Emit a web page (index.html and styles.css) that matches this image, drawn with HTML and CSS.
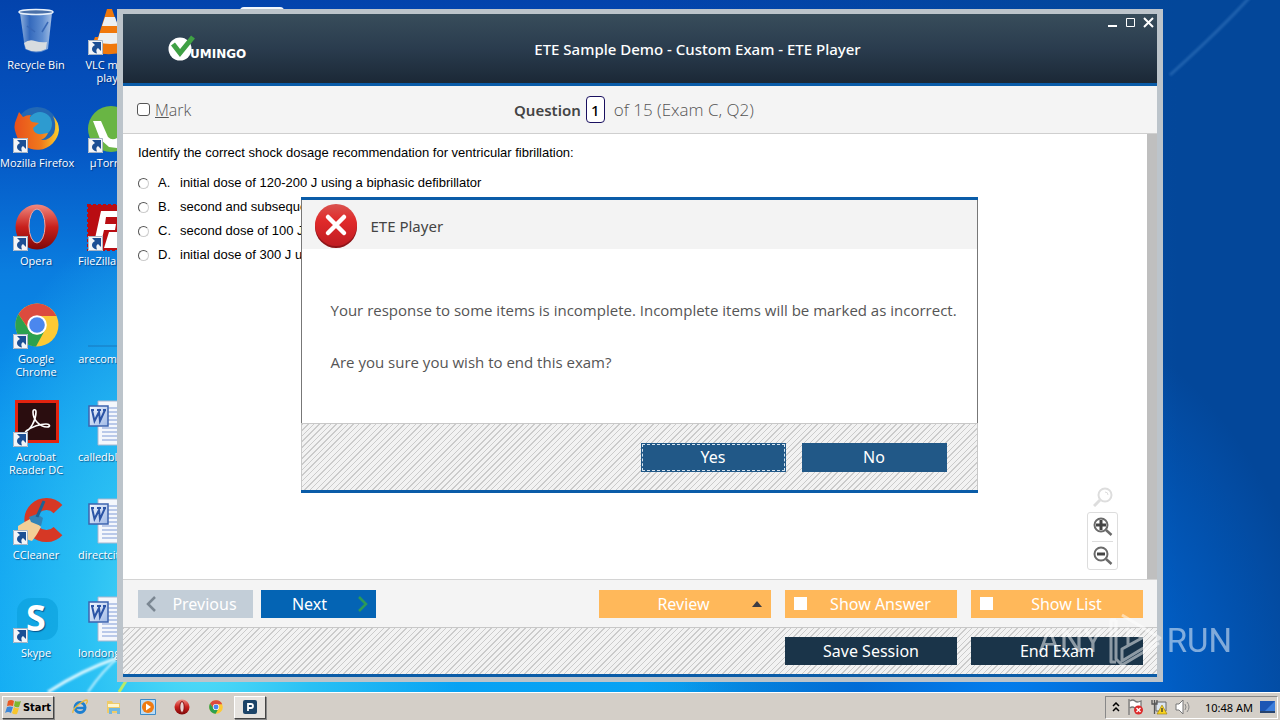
FILE: index.html
```html
<!DOCTYPE html>
<html lang="en">
<head>
<meta charset="utf-8">
<title>ETE Sample Demo - Custom Exam - ETE Player</title>
<link rel="stylesheet" href="styles.css">
</head>
<body>
<svg class="defs" aria-hidden="true">
  <defs>
    <linearGradient id="bin" x1="0" x2="1"><stop offset="0" stop-color="#a9c4e6"/><stop offset=".3" stop-color="#3c6fbe"/><stop offset=".7" stop-color="#6f9ad6"/><stop offset="1" stop-color="#c2d5ee"/></linearGradient>
    <linearGradient id="red" x1="0" y1="0" x2="0" y2="1"><stop offset="0" stop-color="#f08a80"/><stop offset=".5" stop-color="#c8201c"/><stop offset="1" stop-color="#7e0808"/></linearGradient>
    <linearGradient id="err" x1="0" y1="0" x2="0" y2="1"><stop offset="0" stop-color="#d9534f"/><stop offset=".4" stop-color="#e02a2a"/><stop offset="1" stop-color="#c01c22"/></linearGradient>
    <linearGradient id="fox" x1="0" y1="0" x2="1" y2="0"><stop offset="0" stop-color="#e8501c"/><stop offset=".6" stop-color="#f07a1c"/><stop offset="1" stop-color="#fbd02c"/></linearGradient>
    <linearGradient id="word" x1="0" y1="0" x2="1" y2="1"><stop offset="0" stop-color="#f4f8ff"/><stop offset="1" stop-color="#9fb9e6"/></linearGradient>
    <symbol id="shortcut" viewBox="0 0 15 15"><path d="M0 0h15v15H0z" fill="#f3f5f8"/><path d="M.5.5h14v14H.5z" fill="none" stroke="#a7b4c4"/><path d="M4 2h9v9l-3-3C8 9 8 11 9 13.500 3 12.500 2.500 7 7 5z" fill="#1c4f94"/></symbol>
    <symbol id="chrome" viewBox="0 0 44 44"><circle cx="22" cy="22" r="21.500" fill="#fcca35"/><path d="M3.400 11.300A21.500 21.500 0 0 1 41.500 13H22a9.500 9.500 0 0 0-9 12z" fill="#dc4b3e"/><path d="M3.400 11.300A21.500 21.500 0 0 0 21 43.500L30.500 26a9.500 9.500 0 0 1-17.400-.5z" fill="#2ca14f"/><circle cx="22" cy="22" r="9.800" fill="#fff"/><circle cx="22" cy="22" r="7.800" fill="#4b87ee"/></symbol>
    <symbol id="opera" viewBox="0 0 44 46"><path fill-rule="evenodd" d="M22 .5a21.500 22.500 0 1 0 .1 0zM22 5a8 17 0 1 1-.1 0z" fill="url(#red)"/><ellipse cx="22" cy="22" rx="8" ry="17" fill="none" stroke="#f3a59c"/></symbol>
    <symbol id="doc" viewBox="0 0 46 46"><path d="M10 1h36v44H10z" fill="#f4f7fc" stroke="#a9b7cf"/><path d="M14 8h30M14 12h30M14 16h30M14 20h30M14 24h30M14 28h30M14 32h30M14 36h30M14 40h30" stroke="#7f9bd6"/><path d="M1 6h19v20H1z" fill="url(#word)" stroke="#3c64ae" stroke-width="1.500"/><path d="M4 10l2.500 11L11 12l1 9 5-11M3 10h3M9 10h4M15 10h3" fill="none" stroke="#2b54a6" stroke-width="2"/></symbol>
    <symbol id="lens" viewBox="0 0 20 20"><circle cx="8" cy="8" r="6.500" fill="none" stroke="currentColor" stroke-width="2"/><path d="M13 13l5.500 5" stroke="currentColor" stroke-width="2.500"/></symbol>
  </defs>
</svg>
<div class="desktop">
  <svg class="wallpaper" viewBox="0 0 1280 692" preserveAspectRatio="none" aria-hidden="true">
    <defs><filter id="glow"><feGaussianBlur stdDeviation="1.300"/></filter></defs>
    <path d="M48 692Q82 670 120 657" stroke="#d8f7ff" stroke-width="3" fill="none" filter="url(#glow)"/>
    <path d="M88 692Q103 670 119 657" stroke="#c5f2ff" stroke-width="2" fill="none" filter="url(#glow)"/>
    <path d="M119 692l7-11" stroke="#b8ea6a" stroke-width="3"/>
    <path d="M1170 75Q1220 30 1250-3" stroke="#3f7fc4" stroke-width="3" fill="none" opacity=".5" filter="url(#glow)"/>
    <rect x="240" y="7" width="44" height="8" rx="4" fill="#f2f6fb"/>
  </svg>

  <main class="workspace">
    <ul class="icons">
      <li><svg viewBox="0 0 48 48"><path d="M8 5l5 36q11 7 23 0l4-36z" fill="url(#bin)" opacity=".85"/><ellipse cx="24" cy="4" rx="17" ry="2.500" fill="#4a70a8" stroke="#e8f1fb" stroke-width="1.500"/><path d="M12 35q5-4 11-2t12 1l-1 7q-10 5-20 0z" fill="#d8dcdf"/><path d="M15 18l8 6M36 14l-6 10" fill="none" stroke="#3868b6" stroke-width="1.500"/></svg><span>Recycle Bin</span></li>
      <li><svg viewBox="0 0 48 48"><circle cx="25" cy="22" r="21" fill="#2268b4"/><circle cx="28" cy="18" r="12" fill="#2d9bd0"/><path d="M4 14l3-8 4 5q3-2 8-2-3 4 1 7l7 1-6 5q1 7 9 6l6-1q-2 5-7 7 8 1 13-7 3-9-1-17 6 6 6 14a22 22 0 0 1-43 4q-3-8 0-14z" fill="url(#fox)"/><use href="#shortcut" x="1" y="32" width="15" height="15"/></svg><span>Mozilla Firefox</span></li>
      <li><svg viewBox="0 0 48 48"><use href="#opera" x="3" y="0" width="44" height="46"/><use href="#shortcut" x="1" y="32" width="15" height="15"/></svg><span>Opera</span></li>
      <li><svg viewBox="0 0 48 48"><use href="#chrome" x="3" y="1" width="44" height="44"/><use href="#shortcut" x="1" y="32" width="15" height="15"/></svg><span>Google Chrome</span></li>
      <li><svg viewBox="0 0 48 48"><path d="M3 0h44v43H3z" fill="#e2230f"/><path d="M6 3h38v37H6z" fill="#2a0d0f"/><path d="M13 32c5-2 11-11 11-20 0-3-3-3-3 0 0 8 7 15 14 15 4 0 3-3-1-3-7 0-14 3-20 7" fill="none" stroke="#fff" stroke-width="1.600"/><use href="#shortcut" x="1" y="32" width="15" height="15"/></svg><span>Acrobat Reader DC</span></li>
      <li><svg viewBox="0 0 48 48"><path d="M46 11A16 16 0 1 0 46 33" fill="none" stroke="#d63825" stroke-width="12"/><path d="M6 28q8-5 14-8l9 9q-4 8-9 14-8-2-14-10z" fill="#f3cf98"/><path d="M17 19l8-3 6 4-2 8-10-4z" fill="#3284b8"/><path d="M25 19l7-16" stroke="#1d6294" stroke-width="3"/><use href="#shortcut" x="1" y="32" width="15" height="15"/></svg><span>CCleaner</span></li>
      <li><svg viewBox="0 0 48 48"><rect x="5" y="2" width="41" height="42" rx="14" fill="#0aa0dc" opacity=".65"/><text class="skype-s" x="14" y="35">S</text><use href="#shortcut" x="1" y="32" width="15" height="15"/></svg><span>Skype</span></li>
      <li><svg viewBox="0 0 48 48"><path d="M20 1h5l13 38H8z" fill="#f0780c"/><path d="M18 9h10l3 9H15zM13 25h20l3 9H10z" fill="#eceff2"/><path d="M5 37l3-8h30l8 14q-20 5-38 2z" fill="#f0780c"/><path d="M13 25h20l3 9q-12 4-26 0z" fill="#eceff2"/><use href="#shortcut" x="1" y="32" width="15" height="15"/></svg><span>VLC media player</span></li>
      <li><svg viewBox="0 0 48 48"><circle cx="24" cy="23" r="23" fill="#69b544"/><path d="M6 15h8l7 16q4 4 9 1V12h8v30h-8l-8-1-9-8z" fill="#fff"/><use href="#shortcut" x="1" y="32" width="15" height="15"/></svg><span>µTorrent</span></li>
      <li><svg viewBox="0 0 48 48"><path d="M1 1h46v45H1z" fill="#b90d12" stroke="#b90d12" stroke-width="2" stroke-dasharray="3 2"/><path d="M14 7h26l-1 6H19l-1 7h11l-1 6H17l-3 13H7zM22 28h22l-12 11h12v5H17z" fill="#fff"/><use href="#shortcut" x="1" y="32" width="15" height="15"/></svg><span>FileZilla Client</span></li>
      <li><svg viewBox="0 0 48 48"><path d="M1 44h46" stroke="#1879bd" stroke-width="1"/></svg><span>arecomes.jpg</span></li>
      <li><svg viewBox="0 0 48 48"><use href="#doc" x="1" y="0" width="46" height="46"/></svg><span>calledblack.rtf</span></li>
      <li><svg viewBox="0 0 48 48"><use href="#doc" x="1" y="0" width="46" height="46"/></svg><span>directcities.rtf</span></li>
      <li><svg viewBox="0 0 48 48"><use href="#doc" x="1" y="0" width="46" height="46"/></svg><span>londongolf.rtf</span></li>
    </ul>

    <section class="window" aria-label="ETE Player">
      <header class="titlebar">
        <div class="brand">
          <svg width="28" height="28" viewBox="0 0 28 28" aria-hidden="true"><circle cx="12" cy="14" r="11.500" fill="#fff"/><path d="M5 9l7 9L25 2" fill="none" stroke="#3fa044" stroke-width="5"/></svg>
          <span>UMINGO</span>
        </div>
        <h1>ETE Sample Demo - Custom Exam - ETE Player</h1>
        <div class="controls">
          <button aria-label="Minimize"><svg width="11" height="11"><path d="M1 9h9" stroke="#fff" stroke-width="2"/></svg></button>
          <button aria-label="Maximize"><svg width="11" height="11"><path d="M1.500 1.500h8v8h-8z" fill="none" stroke="#fff"/></svg></button>
          <button aria-label="Close"><svg width="11" height="11"><path d="M1 1l9 9M10 1l-9 9" stroke="#fff" stroke-width="2"/></svg></button>
        </div>
      </header>

      <div class="question-bar">
        <label class="mark"><input type="checkbox"><span><u>M</u>ark</span></label>
        <div class="position"><label for="number">Question</label><input id="number" type="text" value="1"><span>of 15 (Exam C, Q2)</span></div>
      </div>

      <div class="content">
        <form class="question">
          <p>Identify the correct shock dosage recommendation for ventricular fibrillation:</p>
          <label><input type="radio" name="answer"><span>A.</span><span>initial dose of 120-200 J using a biphasic defibrillator</span></label>
          <label><input type="radio" name="answer"><span>B.</span><span>second and subsequent</span></label>
          <label><input type="radio" name="answer"><span>C.</span><span>second dose of 100 J</span></label>
          <label><input type="radio" name="answer"><span>D.</span><span>initial dose of 300 J using</span></label>
        </form>
        <div class="zoom">
          <svg class="faint" width="20" height="20" viewBox="0 0 20 20" aria-hidden="true"><circle cx="12" cy="8" r="6.500" fill="none" stroke="currentColor" stroke-width="2"/><path d="M7 13l-6 6" stroke="currentColor" stroke-width="3"/><path d="M12 5a3 3 0 0 1 3 3" fill="none" stroke="currentColor"/></svg>
          <div class="zoom-box">
            <button aria-label="Zoom in"><svg width="20" height="20" viewBox="0 0 20 20"><use href="#lens"/><path d="M8 3v10M3 8h10" stroke="#444" stroke-width="3"/></svg></button>
            <button aria-label="Zoom out"><svg width="20" height="20" viewBox="0 0 20 20"><use href="#lens"/><path d="M4 8h8" stroke="#444" stroke-width="3"/></svg></button>
          </div>
        </div>
        <div class="scrollbar"></div>
      </div>

      <div class="actions">
        <button class="btn previous"><svg width="12" height="18" viewBox="0 0 12 18"><path d="M10 2L3 9l7 7" fill="none" stroke="#7b8792" stroke-width="2.500"/></svg><span>Previous</span></button>
        <button class="btn next"><span>Next</span><svg width="12" height="18" viewBox="0 0 12 18"><path d="M2 2l7 7-7 7" fill="none" stroke="#2b9a58" stroke-width="2.500"/></svg></button>
        <button class="btn amber review"><span>Review</span><svg width="10" height="6"><path d="M0 6l5-6 5 6z" fill="#3c3c44"/></svg></button>
        <label class="btn amber"><input type="checkbox"><span>Show Answer</span></label>
        <label class="btn amber"><input type="checkbox"><span>Show List</span></label>
      </div>
      <footer class="session hatch">
        <button class="btn dark">Save Session</button>
        <button class="btn dark">End Exam</button>
      </footer>
    </section>

    <section class="dialog" role="dialog" aria-labelledby="dialog-title">
      <header>
        <svg width="44" height="46" viewBox="0 0 44 46" aria-hidden="true"><circle cx="22" cy="24" r="21" fill="#8f1418"/><circle cx="22" cy="22" r="21" fill="url(#err)"/><path d="M14 14l16 16M30 14L14 30" stroke="#fff" stroke-width="4.500" stroke-linecap="round"/></svg>
        <h2 id="dialog-title">ETE Player</h2>
      </header>
      <div class="message">
        <p>Your response to some items is incomplete. Incomplete items will be marked as incorrect.</p>
        <p>Are you sure you wish to end this exam?</p>
      </div>
      <footer class="hatch">
        <button class="btn choice focused">Yes</button>
        <button class="btn choice">No</button>
      </footer>
    </section>

    <div class="watermark">
      <span>ANY</span>
      <svg width="56" height="58" viewBox="0 0 56 58" aria-hidden="true"><path d="M15 4l38 23-38 23V38l20-11-14-9v16M9 9H4v42h5M9 9v39l6 6 37-22" fill="none" stroke="#fff" stroke-width="3" stroke-linejoin="round"/></svg>
      <span>RUN</span>
    </div>
  </main>

  <nav class="taskbar">
    <button class="start"><svg width="17" height="17" viewBox="0 0 17 17"><path d="M3 2q3-2 6 0L8 7Q5 6 2 7z" fill="#e85a24"/><path d="M10 2q3 1 6 0l-2 6q-3 1-5-1z" fill="#7db82e"/><path d="M2 8q3-1 6 0l-2 6Q3 12 0 14z" fill="#3d87d8"/><path d="M9 8q2 2 5 1l-2 6q-3 1-5-1z" fill="#f7c52c"/></svg>Start</button>
    <div class="launch">
      <button aria-label="Internet Explorer"><svg viewBox="0 0 16 16"><circle cx="8" cy="8.500" r="5" fill="none" stroke="#1d7fd0" stroke-width="3"/><path d="M4 9h9" stroke="#1d7fd0" stroke-width="2.500"/><path d="M1 14Q0 11 6 6t9-5q1 2-1 4" fill="none" stroke="#ebb93b" stroke-width="1.300"/></svg></button>
      <button aria-label="Explorer"><svg viewBox="0 0 16 16"><path d="M1 2h5l1 2h7v10H1z" fill="#eecb68"/><path d="M2 5h11v3H2z" fill="#fff7cf"/><path d="M3 9h11v6h-3v-3H6v3H3z" fill="#71b7df"/></svg></button>
      <button aria-label="Media Player"><svg viewBox="0 0 16 16"><path d="M.5.5h15v15H.5z" fill="#bcdcf5" stroke="#3c8bc8"/><circle cx="8" cy="8" r="6" fill="#f07b12"/><path d="M6 4.500l5 3.500-5 3.500z" fill="#fff"/></svg></button>
      <button aria-label="Opera"><svg viewBox="0 0 16 16"><circle cx="8" cy="8" r="7.500" fill="url(#red)"/><ellipse cx="8" cy="8" rx="2.200" ry="5.500" fill="#e8d5d2" stroke="#8a0c0c"/></svg></button>
      <button aria-label="Chrome"><svg viewBox="0 0 16 16"><use href="#chrome" x="1" y="1" width="14" height="14"/></svg></button>
    </div>
    <button class="task" aria-label="ETE Player"><svg width="14" height="14" viewBox="0 0 14 14"><rect width="14" height="14" rx="2" fill="#1c4468"/><path d="M5 11V4h3a2 2 0 0 1 0 4H5" fill="none" stroke="#fff" stroke-width="1.800"/></svg></button>
    <div class="tray">
      <svg width="8" height="10" viewBox="0 0 8 10"><path d="M1 4l3-3 3 3M1 9l3-3 3 3" fill="none" stroke="#000" stroke-width="1.500"/></svg>
      <svg width="17" height="16" viewBox="0 0 17 16"><path d="M2 0v16M3 2q3-2 5 0t6 0v7q-3 2-6 0t-5 0" fill="#fff" stroke="#777" stroke-width="1.300"/><circle cx="11.500" cy="11" r="4.500" fill="#dc2b2b"/><path d="M9.500 9l4 4M13.500 9l-4 4" stroke="#fff" stroke-width="1.400"/></svg>
      <svg width="17" height="16" viewBox="0 0 17 16"><path d="M5 3h10v9H5z" fill="#dce5ef" stroke="#666"/><path d="M1 1v4h5V1M3.500 1v14" fill="none" stroke="#555" stroke-width="1.300"/><path d="M11 6l5 9H6z" fill="#f8d320" stroke="#9b7b00" stroke-width=".6"/><path d="M11 9v4" stroke="#333" stroke-width="1.300"/></svg>
      <svg width="17" height="16" viewBox="0 0 17 16"><path d="M1 5h3l4-4v14l-4-4H1z" fill="#fff" stroke="#777"/><path d="M10 5q2 3 0 6M12 3q4 5 0 10" fill="none" stroke="#888"/></svg>
      <time>10:48 AM</time>
      <svg width="15" height="12" viewBox="0 0 15 12"><path d="M0 0h15v10H0z" fill="#3c7edb"/><path d="M0 0h15L5 10H0z" fill="#1c56b4"/><path d="M0 10h15v2H0z" fill="#27436e"/></svg>
    </div>
  </nav>
</div>
</body>
</html>
```

FILE: styles.css
```css
* { box-sizing: border-box; }

body {
  margin: 0;
  font-family: "Noto Sans", "Open Sans", sans-serif;
  overflow: hidden;
}

button, input { font: inherit; margin: 0; }
button { border: 0; padding: 0; background: none; color: inherit; }
h1, h2, p { margin: 0; font-weight: 400; }
svg { display: block; flex: none; }
.defs { position: absolute; width: 0; height: 0; }

.desktop {
  position: relative;
  display: flex;
  flex-direction: column;
  height: 100vh;
  background:
    radial-gradient(ellipse 260px 420px at 200px 620px, #5ae2f8 0%, rgba(50, 200, 244, .8) 45%, rgba(20, 160, 240, 0) 100%),
    radial-gradient(ellipse 320px 420px at 1000px 720px, #0480f0 0%, rgba(0, 104, 216, .8) 45%, rgba(0, 80, 170, 0) 100%),
    linear-gradient(to right, rgba(4, 70, 150, 0) 50%, #03479a 92%),
    linear-gradient(#0343ac 0%, #0556c4 20%, #0a7ee0 38%, #0a94ee 60%, #08a4f4 100%);
}

.wallpaper { position: absolute; inset: 0 0 28px; width: 100%; height: calc(100% - 28px); }

.workspace { position: relative; flex: 1; min-height: 0; }

/* Desktop icons */
.icons {
  display: grid;
  grid-auto-flow: column;
  grid-template-rows: repeat(7, 98px);
  grid-auto-columns: 75px;
  justify-content: start;
  margin: 0;
  padding: 8px 0 0;
  list-style: none;
  color: #fff;
  font: 11px/13px "Open Sans", sans-serif;
  text-align: center;
  text-shadow: 1px 1px 1px rgba(0, 30, 80, .6);
}
.icons li { display: flex; flex-direction: column; align-items: center; gap: 2px; padding-right: 3px; }
.icons svg { width: 48px; height: 48px; overflow: visible; }
.icons span { max-width: 72px; }
.icons li:nth-child(2) span, .icons li:nth-child(n+9) span { white-space: nowrap; }
.icons li:nth-child(n+8) span { padding-left: 3px; }
.skype-s { font: 700 36px "Open Sans", sans-serif; fill: #fff; }

/* Exam window */
.window {
  position: absolute;
  inset: 9px 117px 10px;
  display: flex;
  flex-direction: column;
  border: solid #bcc4cb;
  border-width: 5px 6px;
  background: #f4f4f4;
}
.titlebar {
  display: grid;
  grid-template-columns: 1fr auto 1fr;
  align-items: center;
  height: 72px;
  padding-left: 45px;
  border-bottom: 3px solid #0a5ca8;
  background: linear-gradient(#384d5b, #2a3c4e 50%, #1b2836);
  color: #fff;
}
.titlebar h1 { padding-left: 70px; font-size: 15px; font-weight: 500; }
.brand { display: flex; align-items: center; }
.brand span { font: 700 12px "DejaVu Sans", sans-serif; margin: 10px 0 0 -6px; }
.controls { display: flex; gap: 7px; align-self: start; justify-self: end; padding: 3px 3px 0 0; }

.question-bar {
  display: grid;
  grid-template-columns: 1fr auto 1fr;
  align-items: center;
  height: 48px;
  padding: 0 26px 0 14px;
  border-bottom: 1px solid #cfcfcf;
  color: #555;
  font: 300 16px "Open Sans", sans-serif;
}
.mark { display: flex; align-items: center; gap: 5px; }
.mark input, .question input { appearance: none; width: 13px; height: 13px; border: 1px solid #555; border-radius: 3px; background: #fff; }
.position { display: flex; align-items: center; gap: 5px; }
.position label { font: 600 15px "Noto Sans", sans-serif; color: #444; }
.position input { width: 19px; height: 27px; padding: 0; border: 1px solid #1a1060; border-radius: 4px; background: #fff; text-align: center; color: #000; font: 500 15px "Noto Sans", sans-serif; }
.position span { padding-left: 4px; font-size: 17px; }

.content { position: relative; display: flex; flex: 1; min-height: 0; background: #fff; }
.question { flex: 1; padding: 11px 15px; font: 13px/16px "Liberation Sans", Arial, sans-serif; color: #000; }
.question p { padding-bottom: 10px; }
.question label { display: grid; grid-template-columns: 12px 14px 1fr; align-items: center; gap: 8px; height: 24px; }
.question input { width: 11px; height: 11px; border: 1px solid; border-color: #555 #ccc #ccc #555; border-radius: 50%; }
.scrollbar { width: 10px; background: #bfbfbf; }
.zoom { position: absolute; right: 39px; bottom: 9px; display: flex; flex-direction: column; align-items: center; gap: 5px; }
.faint { color: #ddd; }
.zoom-box { width: 31px; border: 1px solid #ddd; border-radius: 3px; padding: 0 4px; color: #6a6a6a; }
.zoom-box button { display: flex; justify-content: center; align-items: center; width: 100%; height: 28px; }
.zoom-box button + button { border-top: 1px solid #ddd; }

.btn { display: flex; align-items: center; justify-content: center; gap: 6px; width: 172px; height: 28px; color: #fff; font-size: 16px; }
.actions { display: flex; align-items: center; gap: 14px; height: 49px; padding: 0 14px 0 15px; border-top: 1px solid #d4d4d4; border-bottom: 1px solid #c8c8c8; }
.actions .btn { padding: 0 9px; }
.btn span { flex: 1; text-align: center; }
.previous, .btn.next { width: 115px; }
.actions .previous { background: #c3ced8; padding: 0 7px; margin-right: -6px; }
.actions .next { background: #0464b4; padding: 0 7px; }
.amber { background: #ffb85a; }
.actions .review { margin-left: auto; padding-left: 22px; }
.amber input { appearance: none; width: 13px; height: 13px; background: #fff; }
.hatch { background: repeating-linear-gradient(135deg, #cbcbcb 0 1px, #f2f2f2 1px 4px); }
.session { display: flex; justify-content: flex-end; align-items: center; gap: 14px; height: 49px; padding: 0 14px; border-bottom: 3px solid #0a5ca8; }
.dark { background: #1a3449; }

/* Confirmation */
.dialog {
  position: absolute;
  top: 197px;
  right: 2px;
  left: 0;
  width: 677px;
  margin: 0 auto;
  border: solid #0a5ca8;
  border-width: 3px 0;
  background: #fff;
  color: #444;
}
.dialog > * { border: solid #777; border-width: 0 1px; }
.dialog header { display: flex; align-items: center; gap: 13px; height: 49px; padding: 2px 12px 0; background: #f3f3f3; }
.dialog h2 { font-size: 15px; }
.message { display: flex; flex-direction: column; gap: 30px; padding: 50px 16px 50px 29px; color: #555; font: 15px/22px "Open Sans", sans-serif; }
.dialog footer { display: flex; justify-content: flex-end; align-items: center; gap: 16px; height: 67px; padding: 0 30px; border-color: #c8c8c8; border-width: 1px 1px 0; }
.choice { width: 145px; height: 29px; background: #215887; }
.focused { outline: 1px dashed #d5e4f0; outline-offset: -2px; }

.watermark { position: absolute; right: 48px; bottom: 23px; display: flex; align-items: center; gap: 4px; color: #fff; font: 400 33px Roboto, sans-serif; opacity: .5; pointer-events: none; }

/* Taskbar */
.taskbar { position: relative; display: flex; align-items: center; height: 28px; padding: 1px 2px 0; border-top: 1px solid #fff; background: #d4cfc8; font-size: 11px; color: #000; }
.start, .task { display: flex; align-items: center; justify-content: center; height: 23px; border: 1px solid; border-color: #fff #444 #444 #fff; box-shadow: 1px 1px #888; }
.start { width: 52px; gap: 1px; font: 700 11px "DejaVu Sans Condensed", "DejaVu Sans", sans-serif; }
.launch { display: flex; gap: 18px; padding: 0 10px 0 18px; }
.launch svg { width: 16px; height: 16px; }
.task { width: 32px; background: #e6e3df; }
.tray { display: flex; align-items: center; gap: 7px; height: 23px; margin-left: auto; padding: 0 2px 0 6px; border: 1px solid; border-color: #888 #fff #fff #888; }
.tray time { padding: 0 0 0 6px; }
```
